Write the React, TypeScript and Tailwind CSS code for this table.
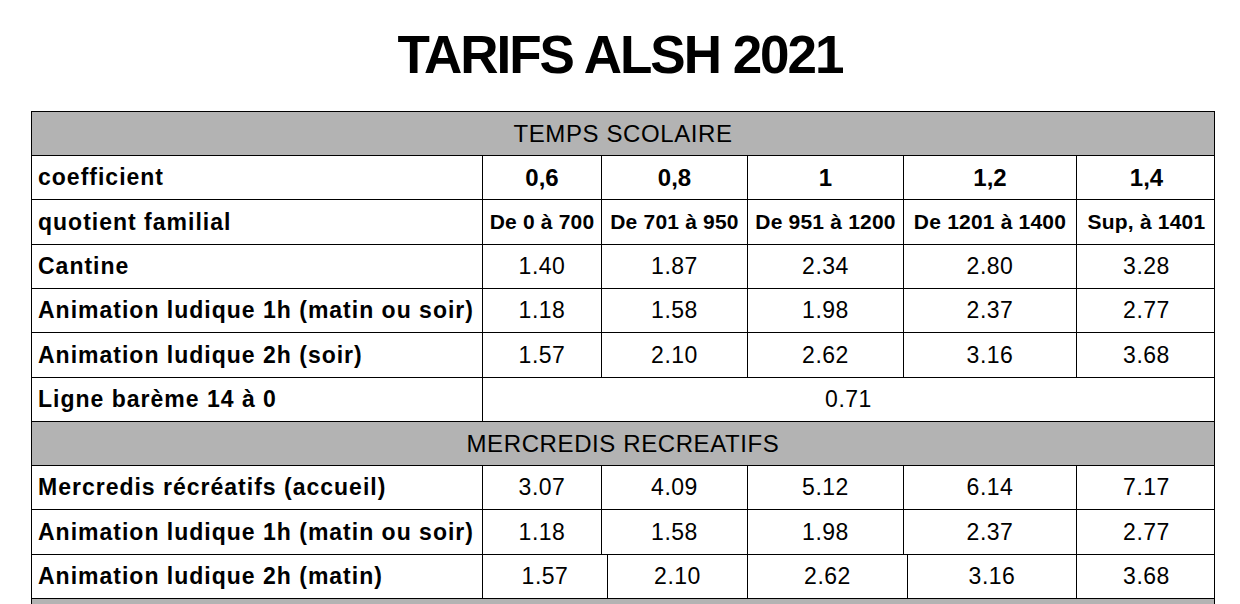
import React from "react";

const cols = ["w-[451px]", "w-[119px]", "w-[146px]", "w-[156px]", "w-[173px]", "w-[139px]"];
// derniere ligne : les traits sont un peu decales dans l'original
const colsLast = ["w-[451px]", "w-[125px]", "w-[140px]", "w-[160px]", "w-[169px]", "w-[139px]"];

type RowProps = {
  label: string;
  values: string[];
  h: string;
  widths?: string[];
  valueClass?: string;
};

const Row: React.FC<RowProps> = ({ label, values, h, widths = cols, valueClass = "text-[23px] tracking-[0.5px]" }) => (
  <div className={`flex ${h} border-b border-black`}>
    <div className={`${widths[0]} shrink-0 flex items-center pl-[6px] border-r border-black font-bold text-[23px] tracking-[1px] whitespace-nowrap`}>
      {label}
    </div>
    {values.map((v, i) => (
      <div
        key={i}
        className={`${widths[i + 1]} shrink-0 flex items-center justify-center ${i < values.length - 1 ? "border-r border-black" : ""} ${valueClass} whitespace-nowrap`}
      >
        {v}
      </div>
    ))}
  </div>
);

const Section: React.FC<{ title: string; h: string }> = ({ title, h }) => (
  <div className={`${h} flex items-center justify-center bg-[#b3b3b3] border-b border-black text-[24px] tracking-[0.6px]`}>
    {title}
  </div>
);

export default function App() {
  return (
    <div className="w-[1240px] min-h-screen bg-white text-black font-['Liberation_Sans',Arial,sans-serif]">
      <header className="h-[111px] pb-[2px] flex items-center justify-center">
        <h1 className="text-[53px] leading-none font-bold tracking-[-2px]">TARIFS ALSH 2021</h1>
      </header>

      <div className="ml-[31px] w-[1184px] border-l border-r border-t border-black">
        <Section title="TEMPS SCOLAIRE" h="h-[44px]" />
        <Row label="coefficient" values={["0,6", "0,8", "1", "1,2", "1,4"]} h="h-[44px]" valueClass="text-[24px] font-bold" />
        <Row
          label="quotient familial"
          values={["De 0 à 700", "De 701 à 950", "De 951 à 1200", "De 1201 à 1400", "Sup, à 1401"]}
          h="h-[45px]"
          valueClass="text-[21px] tracking-[0.2px] font-bold"
        />
        <Row label="Cantine" values={["1.40", "1.87", "2.34", "2.80", "3.28"]} h="h-[44px]" />
        <Row label="Animation ludique 1h (matin ou soir)" values={["1.18", "1.58", "1.98", "2.37", "2.77"]} h="h-[44px]" />
        <Row label="Animation ludique 2h (soir)" values={["1.57", "2.10", "2.62", "3.16", "3.68"]} h="h-[45px]" />

        <div className="flex h-[44px] border-b border-black">
          <div className="w-[451px] shrink-0 flex items-center pl-[6px] border-r border-black font-bold text-[23px] tracking-[1px] whitespace-nowrap">
            Ligne barème 14 à 0
          </div>
          <div className="flex-1 flex items-center justify-center text-[23px] tracking-[0.5px]">0.71</div>
        </div>

        <Section title="MERCREDIS RECREATIFS" h="h-[44px]" />
        <Row label="Mercredis récréatifs (accueil)" values={["3.07", "4.09", "5.12", "6.14", "7.17"]} h="h-[44px]" />
        <Row label="Animation ludique 1h (matin ou soir)" values={["1.18", "1.58", "1.98", "2.37", "2.77"]} h="h-[45px]" />
        <Row label="Animation ludique 2h (matin)" values={["1.57", "2.10", "2.62", "3.16", "3.68"]} h="h-[44px]" widths={colsLast} />

        <div className="h-[44px] bg-[#b3b3b3] border-b border-black" />
      </div>
    </div>
  );
}
